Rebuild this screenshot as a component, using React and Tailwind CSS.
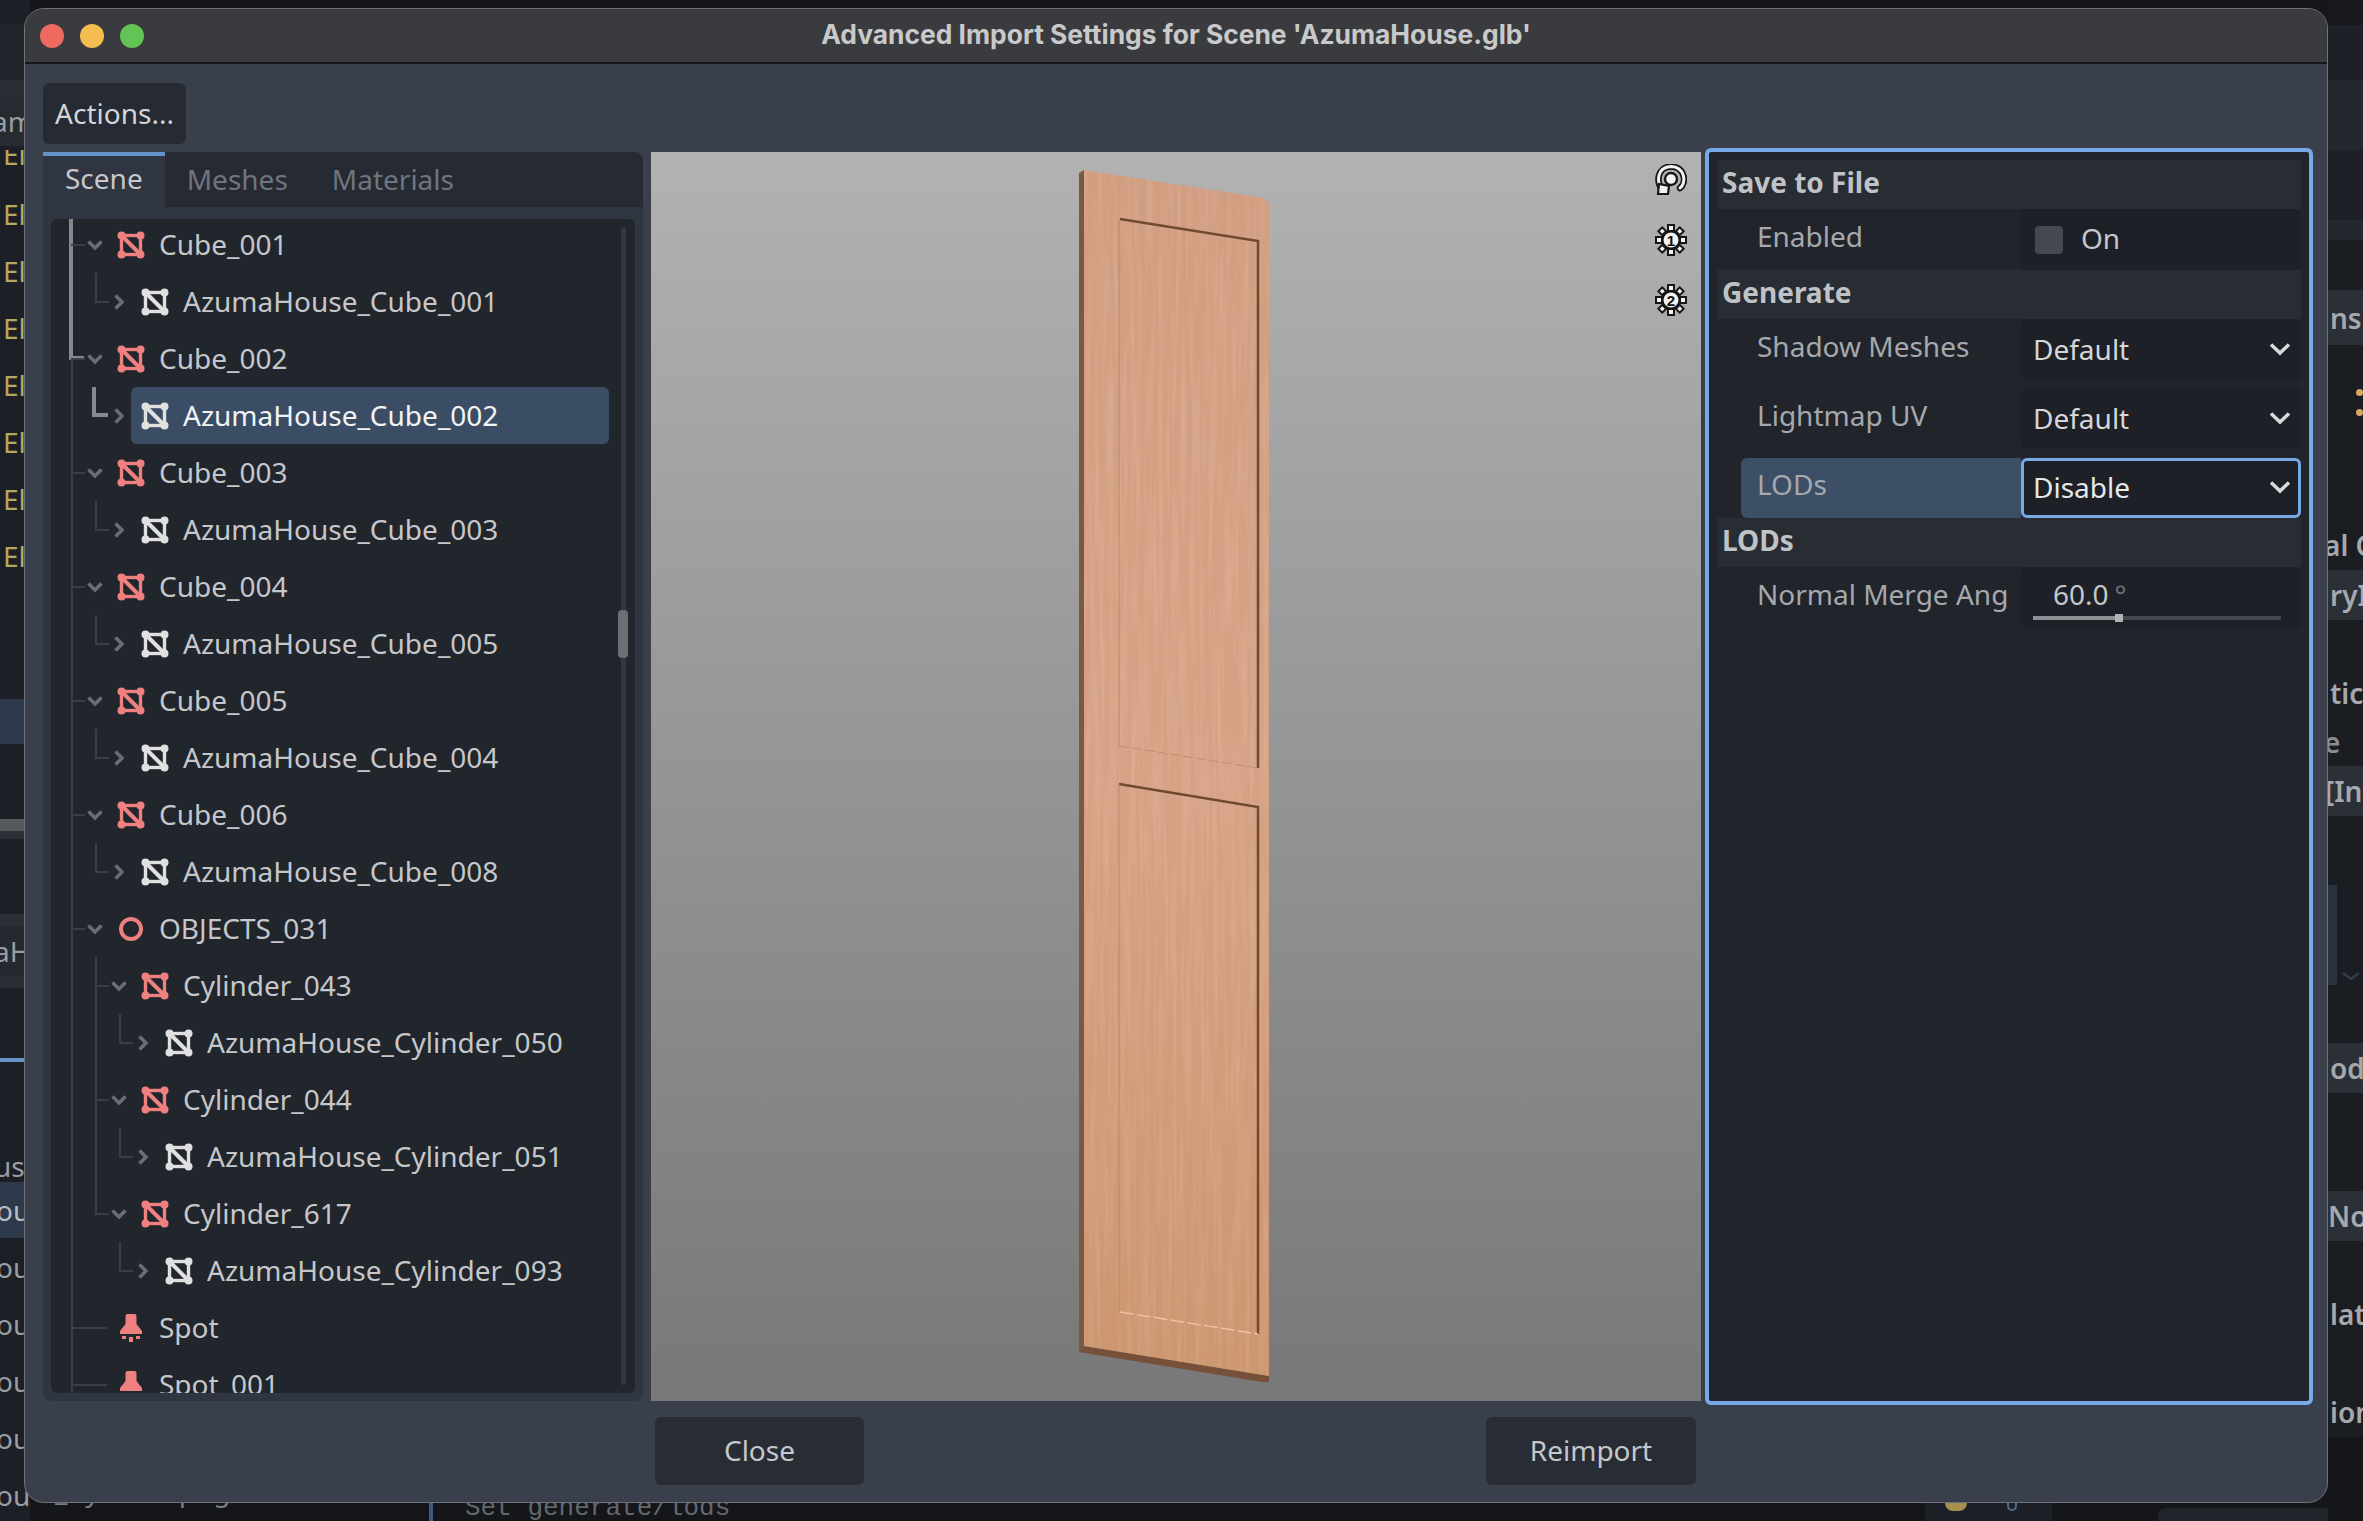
import React from 'react';

const TREE = [
    { name: 'Cube_001', level: 0, icon: 'red', open: true, guides: ['tee'] },
    { name: 'AzumaHouse_Cube_001', level: 1, icon: 'white', guides: ['ell1'] },
    { name: 'Cube_002', level: 0, icon: 'red', open: true, guides: ['tee'] },
    { name: 'AzumaHouse_Cube_002', level: 1, icon: 'white', selected: true, guides: ['ellHi'] },
    { name: 'Cube_003', level: 0, icon: 'red', open: true, guides: ['tee'] },
    { name: 'AzumaHouse_Cube_003', level: 1, icon: 'white', guides: ['ell1'] },
    { name: 'Cube_004', level: 0, icon: 'red', open: true, guides: ['tee'] },
    { name: 'AzumaHouse_Cube_005', level: 1, icon: 'white', guides: ['ell1'] },
    { name: 'Cube_005', level: 0, icon: 'red', open: true, guides: ['tee'] },
    { name: 'AzumaHouse_Cube_004', level: 1, icon: 'white', guides: ['ell1'] },
    { name: 'Cube_006', level: 0, icon: 'red', open: true, guides: ['tee'] },
    { name: 'AzumaHouse_Cube_008', level: 1, icon: 'white', guides: ['ell1'] },
    { name: 'OBJECTS_031', level: 0, icon: 'ring', open: true, guides: ['tee'] },
    { name: 'Cylinder_043', level: 1, icon: 'red', open: true, guides: ['through', 'tee2'] },
    { name: 'AzumaHouse_Cylinder_050', level: 2, icon: 'white', guides: ['through', 'ell2'] },
    { name: 'Cylinder_044', level: 1, icon: 'red', open: true, guides: ['through', 'tee2'] },
    { name: 'AzumaHouse_Cylinder_051', level: 2, icon: 'white', guides: ['through', 'ell2'] },
    { name: 'Cylinder_617', level: 1, icon: 'red', open: true, guides: ['ell1'] },
    { name: 'AzumaHouse_Cylinder_093', level: 2, icon: 'white', guides: ['ell2'] },
    { name: 'Spot', level: 0, icon: 'spot', leaf: true, guides: ['long'] },
    { name: 'Spot_001', level: 0, icon: 'spot', leaf: true, guides: ['long'] },
];

const GUIDE = {
    tee: 'left-[20px] top-[28px] h-[2px] w-[14px] bg-[#3a3e46]',
    long: 'left-[20px] top-[28px] h-[2px] w-[36px] bg-[#3a3e46]',
    ell1: 'left-[44px] top-0 h-[30px] w-[14px] border-b-2 border-l-2 border-[#3a3e46]',
    ellHi: 'left-[41px] top-0 h-[30px] w-[16px] border-b-4 border-l-4 border-[#85888d]',
    through: 'left-[44px] top-0 h-full w-[2px] bg-[#3a3e46]',
    tee2: 'left-[44px] top-[28px] h-[2px] w-[14px] bg-[#3a3e46]',
    ell2: 'left-[68px] top-0 h-[30px] w-[14px] border-b-2 border-l-2 border-[#3a3e46]',
};

const LEVEL_PAD = ['pl-[36px]', 'pl-[60px]', 'pl-[84px]'];

const LEFT_STRIP = [
    { cls: 'h-[24px] bg-[#1c1f25]' },
    { cls: 'h-[56px] bg-[#1f232a]' },
    { cls: 'h-[16px] bg-[#2a2e35]' },
    { cls: 'h-[50px] bg-[#262a31] text-[#9a9da2] -ml-[8px]', text: 'am' },
    { cls: 'h-[4px] bg-[#1c1f25]' },
    { cls: 'h-[35px] bg-[#1c1f25] text-[#b5a860] pl-[3px] items-start leading-[28px]', text: 'El', textCls: '-mt-[10px]' },
    ...[0, 1, 2, 3, 4, 5, 6].map(() => ({ cls: 'h-[57px] bg-[#1c1f25] text-[#b5a860] pl-[3px]', text: 'El' })),
    { cls: 'h-[115px] bg-[#1c1f25]' },
    { cls: 'h-[45px] bg-[#2c3a4b]' },
    { cls: 'h-[75px] bg-[#1c1f25]' },
    { cls: 'h-[12px] bg-[#55585c]' },
    { cls: 'h-[8px] bg-[#2a2e35]' },
    { cls: 'h-[75px] bg-[#1c1f25]' },
    { cls: 'h-[12px] bg-[#2a2e35]' },
    { cls: 'h-[50px] bg-[#24282f] text-[#9a9da2] -ml-[6px]', text: 'aH' },
    { cls: 'h-[12px] bg-[#2a2e35]' },
    { cls: 'h-[70px] bg-[#1c1f25]' },
    { cls: 'h-[4px] bg-[#6391c8]' },
    { cls: 'h-[88px] bg-[#1c1f25]' },
    { cls: 'h-[32px] bg-[#1c1f25] text-[#9a9da2] -ml-[6px]', text: 'us' },
    { cls: 'h-[56px] bg-[#2c3a4b] text-[#b9bcc0] -ml-[4px]', text: 'ou' },
    ...[0, 1, 2, 3, 4].map(() => ({ cls: 'h-[57px] bg-[#1c1f25] text-[#9a9da2] -ml-[4px]', text: 'ou' })),
];

const RIGHT_STRIP = [
    { cls: 'h-[25px] bg-[#16181d]' },
    { cls: 'h-[55px] bg-[#1d2127]' },
    { cls: 'h-[70px] bg-[#23272e]' },
    { cls: 'h-[70px] bg-[#1d2127]' },
    { cls: 'h-[20px] bg-[#23272e]' },
    { cls: 'h-[50px] bg-[#1a1d22]' },
    { cls: 'h-[55px] bg-[#2b2f36] pl-[2px]', text: 'ns' },
    { cls: 'h-[175px] bg-[#1a1d22]', dots: true },
    { cls: 'h-[50px] bg-[#1a1d22] -ml-[4px]', text: 'al C' },
    { cls: 'h-[50px] bg-[#2b2f36] pl-[2px]', text: 'ryI' },
    { cls: 'h-[48px] bg-[#1a1d22]' },
    { cls: 'h-[50px] bg-[#1a1d22] pl-[2px]', text: 'tic' },
    { cls: 'h-[48px] bg-[#1a1d22] -ml-[4px] text-[#8a8d91]', text: 'e' },
    { cls: 'h-[50px] bg-[#2b2f36] -ml-[3px]', text: '[Ins' },
    { cls: 'h-[69px] bg-[#1a1d22]' },
    { cls: 'h-[100px] bg-[#1a1d22]', drop: true },
    { cls: 'h-[58px] bg-[#1a1d22]' },
    { cls: 'h-[50px] bg-[#2b2f36] pl-[2px]', text: 'od' },
    { cls: 'h-[98px] bg-[#1a1d22]' },
    { cls: 'h-[50px] bg-[#2b2f36]', text: 'No' },
    { cls: 'h-[48px] bg-[#1a1d22]' },
    { cls: 'h-[50px] bg-[#1a1d22] pl-[2px]', text: 'lat' },
    { cls: 'h-[48px] bg-[#1a1d22]' },
    { cls: 'h-[50px] bg-[#1a1d22] pl-[2px]', text: 'ion' },
    { cls: 'h-[90px] bg-[#14161a]' },
];

const MeshIcon = ({ color }) => (
    <svg width="28" height="28" viewBox="0 0 28 28" className="shrink-0">
        <g stroke={color} strokeWidth="3.4" fill="none">
            <rect x="4.5" y="4.5" width="19" height="19" />
            <path d="M5 5 L23 23" strokeWidth="4" />
        </g>
        <g fill={color}>
            <circle cx="4.5" cy="4.5" r="4" />
            <circle cx="23.5" cy="4.5" r="4" />
            <circle cx="4.5" cy="23.5" r="4" />
            <circle cx="23.5" cy="23.5" r="4" />
        </g>
    </svg>
);

const RingIcon = () => (
    <svg width="28" height="28" viewBox="0 0 28 28" className="shrink-0">
        <circle cx="14" cy="14" r="10" fill="none" stroke="#ee8080" strokeWidth="4" />
    </svg>
);

const SpotIcon = () => (
    <svg width="28" height="28" viewBox="0 0 28 28" className="shrink-0">
        <path d="M8.5 2 Q8.5 0 10.5 0 H17.5 Q19.5 0 19.5 2 V10 L25 17 V20 H3 V17 L8.5 10 Z" fill="#ee8080" />
        <rect x="5" y="22" width="4" height="3" fill="#ee8080" />
        <rect x="19" y="22" width="4" height="3" fill="#ee8080" />
        <rect x="12" y="23" width="4" height="5" fill="#ee8080" />
    </svg>
);

const Chevron = ({ open, color = '#6a6e74', leaf }) => {
    if (leaf) return <span className="w-[16px] shrink-0" />;
    return (
        <svg width="16" height="16" viewBox="0 0 16 16" className="shrink-0">
            {open ? (
                <path d="M1.5 4.5 L8 11 L14.5 4.5" fill="none" stroke={color} strokeWidth="3.5" />
            ) : (
                <path d="M4.5 1.5 L11 8 L4.5 14.5" fill="none" stroke={color} strokeWidth="3.5" />
            )}
        </svg>
    );
};

const TreeRow = ({ row }) => (
    <div className={`relative flex h-[57px] items-center ${LEVEL_PAD[row.level]}`}>
        {row.selected && <div className="absolute bottom-0 left-[80px] right-[26px] top-0 rounded-[6px] bg-[#3b4d64]" />}
        {row.guides.map((g) => (
            <span key={g} className={`absolute ${GUIDE[g]}`} />
        ))}
        <div className="relative flex items-center">
            <Chevron open={row.open} leaf={row.leaf} />
            <span className="ml-[14px]">
                {row.icon === 'red' && <MeshIcon color="#ee8080" />}
                {row.icon === 'white' && <MeshIcon color="#e0e0e0" />}
                {row.icon === 'ring' && <RingIcon />}
                {row.icon === 'spot' && <SpotIcon />}
            </span>
            <span className={`ml-[14px] whitespace-nowrap pb-[1px] ${row.selected ? 'text-[#f2f3f4]' : 'text-[#c5c7ca]'}`}>{row.name}</span>
        </div>
    </div>
);

const Section = ({ title }) => (
    <div className="flex h-[49px] items-center bg-[#282c33] pb-[5px] pl-[5px] font-bold text-[#bfc2c6]">{title}</div>
);

const Label = ({ children }) => <div className="w-[304px] shrink-0 pb-[8px] pl-[40px] whitespace-nowrap text-[#a5a8ad]">{children}</div>;

const SelectArrow = () => (
    <svg width="22" height="14" viewBox="0 0 22 14" className="shrink-0">
        <path d="M2 2.5 L11 11 L20 2.5" fill="none" stroke="#d8d9db" strokeWidth="3.5" />
    </svg>
);

const SelectRow = ({ label, value }) => (
    <div className="flex h-[61px] items-center">
        <Label>{label}</Label>
        <div className="flex h-full flex-1 items-center justify-between rounded-[6px] bg-[#1d2026] pb-[2px] pl-[12px] pr-[10px] text-[#d5d6d8]">
            {value}
            <SelectArrow />
        </div>
    </div>
);

const RotateGizmo = () => (
    <svg width="32" height="32" viewBox="0 0 32 32">
        <g fill="none" strokeLinecap="round">
            <path d="M9 27 C0 19 2 3 16 2.5 C30 3 32 19 25 24" stroke="#161616" strokeWidth="6.5" />
            <path d="M9 27 C0 19 2 3 16 2.5 C30 3 32 19 25 24" stroke="#f2f2f2" strokeWidth="3" />
        </g>
        <path d="M4 20 L14 22 L13 30 L3 30 Z" fill="#f2f2f2" stroke="#161616" strokeWidth="2.2" />
        <circle cx="16" cy="15" r="6" fill="#f2f2f2" stroke="#161616" strokeWidth="2.4" />
    </svg>
);

const SunIcon = ({ digit }) => (
    <svg width="32" height="32" viewBox="0 0 32 32">
        <g fill="#f2f2f2" stroke="#161616" strokeWidth="2">
            <rect x="13" y="1" width="6" height="6" />
            <rect x="13" y="25" width="6" height="6" />
            <rect x="1" y="13" width="6" height="6" />
            <rect x="25" y="13" width="6" height="6" />
            <rect x="4.5" y="4.5" width="5.5" height="5.5" transform="rotate(45 7.25 7.25)" />
            <rect x="22" y="4.5" width="5.5" height="5.5" transform="rotate(45 24.75 7.25)" />
            <rect x="4.5" y="22" width="5.5" height="5.5" transform="rotate(45 7.25 24.75)" />
            <rect x="22" y="22" width="5.5" height="5.5" transform="rotate(45 24.75 24.75)" />
            <circle cx="16" cy="16" r="8.5" />
        </g>
        <text x="16" y="21.5" textAnchor="middle" fontSize="15" fontWeight="900" fontFamily="Liberation Sans" fill="#111">
            {digit}
        </text>
    </svg>
);

const Door = () => (
    <svg className="absolute inset-0" width="1050" height="1249" viewBox="651 152 1050 1249">
        <defs>
            <linearGradient id="wood" x1="0" y1="0" x2="0" y2="1">
                <stop offset="0" stopColor="#d19d80" />
                <stop offset="0.5" stopColor="#d6a286" />
                <stop offset="1" stopColor="#cc966f" />
            </linearGradient>
            <filter id="grain" x="0" y="0" width="100%" height="100%">
                <feTurbulence type="fractalNoise" baseFrequency="0.22 0.008" numOctaves="3" seed="4" />
                <feColorMatrix values="0 0 0 0 1  0 0 0 0 0.85  0 0 0 0 0.75  1.4 0 0 0 -0.55" />
            </filter>
            <clipPath id="front">
                <polygon points="1084,170 1264,198 1269,203 1269,1376 1084,1346" />
            </clipPath>
        </defs>
        <polygon points="1079,173 1084,170 1084,1346 1079,1352" fill="#7b5843" />
        <polygon points="1079,1352 1084,1346 1269,1376 1269,1382 1262,1382" fill="#77503a" />
        <polygon points="1084,170 1264,198 1269,203 1269,1376 1084,1346" fill="url(#wood)" />
        <g clipPath="url(#front)">
            <rect x="1084" y="170" width="185" height="1210" filter="url(#grain)" opacity="0.22" />
        </g>
        <g fill="none">
            <path d="M1120 219 L1258 241 L1258 768" stroke="#70492f" strokeWidth="2.5" />
            <path d="M1119 784 L1258 807 L1258 1334" stroke="#70492f" strokeWidth="2.5" />
            <path d="M1119 219 L1119 746" stroke="#b98a6c" strokeWidth="1" />
            <path d="M1119 784 L1119 1312" stroke="#b98a6c" strokeWidth="1" />
            <path d="M1119 746 L1258 768" stroke="#c08f70" strokeWidth="1" strokeDasharray="10 3" />
            <path d="M1120 1312 L1258 1334" stroke="#eec2a2" strokeWidth="1.5" strokeDasharray="14 3" />
        </g>
    </svg>
);

const StripRow = ({ row }) => (
    <div className={`relative flex shrink-0 items-center overflow-hidden whitespace-nowrap ${row.cls}`}>
        {row.text && <span className={row.textCls}>{row.text}</span>}
        {row.dots && (
            <div className="ml-[28px] flex flex-col gap-[13px] pb-[60px]">
                <span className="h-[7px] w-[7px] rounded-full bg-[#d8a95b]" />
                <span className="h-[7px] w-[7px] rounded-full bg-[#d8a95b]" />
            </div>
        )}
        {row.drop && (
            <div className="flex h-full w-full items-end">
                <span className="h-full w-[9px] bg-[#2a3440]" />
                <svg width="20" height="10" viewBox="0 0 20 10" className="mb-[4px] ml-[4px]">
                    <path d="M2 2 L10 8 L18 2" fill="none" stroke="#2f3c4a" strokeWidth="2.5" />
                </svg>
            </div>
        )}
    </div>
);

export default function App() {
    return (
        <div className="relative flex h-[1521px] w-[2363px] overflow-hidden bg-[#14161a] font-['Noto_Sans',sans-serif] text-[28px] leading-none">
            <div className="flex h-full w-[30px] shrink-0 flex-col overflow-hidden">
                {LEFT_STRIP.map((row, i) => (
                    <StripRow key={i} row={row} />
                ))}
            </div>

            <div className="flex flex-1 flex-col justify-end overflow-hidden">
                <div className="flex h-[18px] items-start text-[#63676e]">
                    <span className="ml-[25px] -mt-[27px] w-[374px] shrink-0 whitespace-nowrap text-[#7b7e83]">_Cylinder.png</span>
                    <span className="h-full w-[4px] shrink-0 bg-[#3d5a80]" />
                    <span className="ml-[32px] -mt-[8px] w-[264px] shrink-0 whitespace-nowrap font-['Liberation_Mono',monospace] text-[26px]">Set generate/lods</span>
                    <div className="ml-[1196px] flex h-full w-[127px] shrink-0 items-start gap-[40px] bg-[#1c1f25] pl-[20px]">
                        <span className="h-[8px] w-[22px] rounded-b-full bg-[#a58f4e]" />
                        <span className="h-[8px] w-[10px] rounded-b-full border-2 border-t-0 border-[#4d6a8f]" />
                    </div>
                    <span className="ml-[106px] mt-[5px] h-full flex-1 rounded-tl-[8px] bg-[#20242a]" />
                </div>
            </div>

            <div className="flex h-full w-[35px] shrink-0 flex-col overflow-hidden font-semibold text-[#a5a8ad]">
                {RIGHT_STRIP.map((row, i) => (
                    <StripRow key={i} row={row} />
                ))}
            </div>

            <div className="absolute left-[24px] top-[8px] flex h-[1495px] w-[2304px] flex-col overflow-hidden rounded-[20px] border border-[#6f7278] bg-[#3a404b]">
                <div className="relative flex h-[55px] shrink-0 items-center justify-center border-b-2 border-[#15161a] bg-[#3a3b3f]">
                    <div className="absolute left-[15px] top-[15px] flex gap-[16px]">
                        <span className="h-[24px] w-[24px] rounded-full bg-[#ee6a5f]" />
                        <span className="h-[24px] w-[24px] rounded-full bg-[#f5bd4f]" />
                        <span className="h-[24px] w-[24px] rounded-full bg-[#61c454]" />
                    </div>
                    <span className="pb-[2px] font-['Inter',sans-serif] text-[26.4px] font-bold text-[#c9c9ca]">
                        Advanced Import Settings for Scene 'AzumaHouse.glb'
                    </span>
                </div>

                <div className="flex flex-1 flex-col pl-[18px] pt-[19px]">
                    <div className="flex h-[61px] w-[143px] items-center justify-center rounded-[6px] bg-[#262a32] pb-[1px] text-[#d3d5d7]">Actions...</div>

                    <div className="mt-[8px] flex h-[1249px]">
                        <div className="flex w-[600px] shrink-0 flex-col overflow-hidden rounded-b-[8px] rounded-tr-[8px]">
                            <div className="flex h-[55px] shrink-0 items-stretch bg-[#262a32] text-[#6f757e]">
                                <div className="flex items-center border-t-4 border-[#6391c8] bg-[#2f3541] px-[22px] pb-[7px] text-[#c5c7ca]">Scene</div>
                                <div className="flex items-center px-[22px] pb-[2px]">Meshes</div>
                                <div className="flex items-center px-[22px] pb-[2px]">Materials</div>
                            </div>
                            <div className="flex flex-1 flex-col overflow-hidden bg-[#2f3541] px-[8px] pb-[8px] pt-[12px]">
                                <div className="relative flex-1 overflow-hidden rounded-[6px] bg-[#21252c]">
                                    <span className="absolute bottom-0 left-[20px] top-0 w-[2px] bg-[#3a3e46]" />
                                    <span className="absolute left-[18px] top-0 h-[141px] w-[15px] border-b-4 border-l-4 border-[#85888d]" />
                                    <div className="-mt-[3px]">
                                        {TREE.map((row) => (
                                            <TreeRow key={row.name} row={row} />
                                        ))}
                                    </div>
                                    <span className="absolute bottom-[8px] right-[9px] top-[8px] w-[5px] rounded-full bg-[#33373f]" />
                                    <span className="absolute right-[7px] top-[391px] h-[48px] w-[10px] rounded-[4px] bg-[#6b6e73]" />
                                </div>
                            </div>
                        </div>

                        <div className="relative ml-[8px] w-[1050px] shrink-0 bg-gradient-to-b from-[#b2b2b2] to-[#787878]">
                            <Door />
                            <div className="absolute right-[14px] top-[12px] flex flex-col gap-[28px]">
                                <RotateGizmo />
                                <SunIcon digit="1" />
                                <SunIcon digit="2" />
                            </div>
                        </div>

                        <div className="relative z-10 -my-[4px] ml-[4px] w-[608px] shrink-0 rounded-[6px] border-4 border-[#76a9e6] bg-[#21252b] px-[8px] pt-[8px]">
                            <Section title="Save to File" />
                            <div className="flex h-[61px] items-center">
                                <Label>Enabled</Label>
                                <div className="flex h-full flex-1 items-center rounded-[6px] bg-[#1d2026] pl-[14px] text-[#c5c7ca]">
                                    <span className="h-[28px] w-[28px] rounded-[4px] bg-[#45484e]" />
                                    <span className="mb-[3px] ml-[18px]">On</span>
                                </div>
                            </div>
                            <Section title="Generate" />
                            <div className="flex flex-col gap-[8px]">
                                <SelectRow label="Shadow Meshes" value="Default" />
                                <SelectRow label="Lightmap UV" value="Default" />
                            </div>
                            <div className="mt-[9px] flex h-[60px] items-stretch pl-[24px]">
                                <div className="flex w-[280px] shrink-0 items-center rounded-l-[6px] bg-[#3c4f67] pb-[8px] pl-[16px] text-[#a5a8ad]">LODs</div>
                                <div className="flex flex-1 items-center justify-between rounded-[6px] border-[3px] border-[#76a9e6] bg-[#1d2026] pb-[3px] pl-[9px] pr-[7px] text-[#e6e7e8]">
                                    Disable
                                    <SelectArrow />
                                </div>
                            </div>
                            <Section title="LODs" />
                            <div className="flex h-[61px] items-center">
                                <Label>Normal Merge Ang</Label>
                                <div className="relative flex h-full flex-1 items-start rounded-[6px] bg-[#1d2026] pl-[32px] pt-[13px] text-[#c5c7ca]">
                                    60.0
                                    <span className="ml-[6px] text-[#6f757e]">°</span>
                                    <div className="absolute bottom-[8px] left-[12px] flex h-[4px] w-[248px] items-center bg-[#43474e]">
                                        <div className="h-full w-[82px] bg-[#8b8e93]" />
                                        <div className="h-[8px] w-[8px] bg-[#b0b3b7]" />
                                    </div>
                                </div>
                            </div>
                        </div>
                    </div>

                    <div className="ml-[612px] mt-[16px] flex w-[1041px] justify-between">
                        <div className="flex h-[68px] w-[209px] items-center justify-center rounded-[6px] bg-[#282c34] pb-[3px] text-[#c5c7ca]">Close</div>
                        <div className="flex h-[68px] w-[210px] items-center justify-center rounded-[6px] bg-[#282c34] pb-[3px] text-[#c5c7ca]">Reimport</div>
                    </div>
                </div>
            </div>
        </div>
    );
}
